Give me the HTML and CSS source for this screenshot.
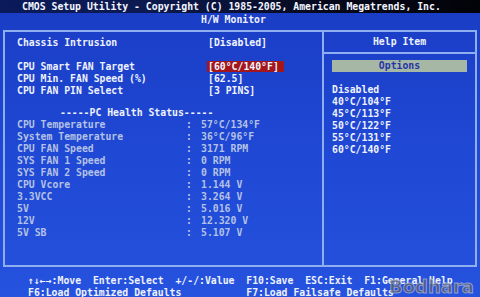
FILE: index.html
```html
<!DOCTYPE html>
<html>
<head>
<meta charset="utf-8">
<link rel="stylesheet" href="styles.css">
</head>
<body>
<div class="screen">
  <div class="topbar">CMOS Setup Utility - Copyright (C) 1985-2005, American Megatrends, Inc.</div>
  <div class="subtitle">H/W Monitor</div>
  <div class="frame">
    <div class="left">
      <div class="row"><span class="label">Chassis Intrusion</span><span class="value">[Disabled]</span></div>
      <div class="row blank"></div>
      <div class="row"><span class="label">CPU Smart FAN Target</span><span class="value"><span class="sel">[60°C/140°F]</span></span></div>
      <div class="row"><span class="label">CPU Min. FAN Speed (%)</span><span class="value">[62.5]</span></div>
      <div class="row"><span class="label">CPU FAN PIN Select</span><span class="value">[3 PINS]</span></div>
      <div class="row gap"></div>
      <div class="row heading">-----PC Health Status-----</div>
      <div class="row stat"><span class="label">CPU Temperature</span><span class="colon">:</span><span class="sval">57°C/134°F</span></div>
      <div class="row stat"><span class="label">System Temperature</span><span class="colon">:</span><span class="sval">36°C/96°F</span></div>
      <div class="row stat"><span class="label">CPU FAN Speed</span><span class="colon">:</span><span class="sval">3171 RPM</span></div>
      <div class="row stat"><span class="label">SYS FAN 1 Speed</span><span class="colon">:</span><span class="sval">0 RPM</span></div>
      <div class="row stat"><span class="label">SYS FAN 2 Speed</span><span class="colon">:</span><span class="sval">0 RPM</span></div>
      <div class="row stat"><span class="label">CPU Vcore</span><span class="colon">:</span><span class="sval">1.144 V</span></div>
      <div class="row stat"><span class="label">3.3VCC</span><span class="colon">:</span><span class="sval">3.264 V</span></div>
      <div class="row stat"><span class="label">5V</span><span class="colon">:</span><span class="sval">5.016 V</span></div>
      <div class="row stat"><span class="label">12V</span><span class="colon">:</span><span class="sval">12.320 V</span></div>
      <div class="row stat"><span class="label">5V SB</span><span class="colon">:</span><span class="sval">5.107 V</span></div>
    </div>
    <div class="right">
      <div class="help-head">Help Item</div>
      <div class="options">Options</div>
      <div class="opt-list">
        <div class="opt">Disabled</div>
        <div class="opt">40°C/104°F</div>
        <div class="opt">45°C/113°F</div>
        <div class="opt">50°C/122°F</div>
        <div class="opt">55°C/131°F</div>
        <div class="opt">60°C/140°F</div>
      </div>
    </div>
  </div>
  <div class="keys">
    <div class="keyline">↑↓←→:Move  Enter:Select  +/-/:Value  F10:Save  ESC:Exit  F1:General Help</div>
    <div class="keyline">F6:Load Optimized Defaults           F7:Load Failsafe Defaults</div>
  </div>
  <div class="watermark">Bodhara</div>
</div>
</body>
</html>
```

FILE: styles.css
```css
html, body {
  margin: 0;
  padding: 0;
}
body {
  width: 480px;
  height: 297px;
  overflow: hidden;
  background: #1e46d2;
}
.screen {
  position: relative;
  width: 480px;
  height: 297px;
  overflow: hidden;
  font-family: "DejaVu Sans Mono", "Liberation Mono", monospace;
  font-weight: bold;
  font-size: 9.8px;
  color: #eef2ff;
  background: linear-gradient(180deg, #1a3cc4 0%, #1f48d4 50%, #2552de 100%);
}
.topbar {
  height: 13px;
  line-height: 13px;
  padding-left: 22px;
  white-space: pre;
  color: #f4f6ff;
  background: linear-gradient(90deg, #0a1a5a 0%, #0c1a50 30%, #06081a 70%, #020308 100%);
}
.subtitle {
  height: 13px;
  line-height: 13px;
  padding-left: 201px;
  white-space: pre;
}
.frame {
  margin: 4px 0 0 3px;
  width: 470px;
  height: 233px;
  border: 2px solid #8eaef0;
  display: flex;
}
.left {
  width: 319px;
  border-right: 2px solid #8eaef0;
  padding-top: 5px;
  padding-left: 12px;
  box-sizing: border-box;
}
.row {
  height: 12px;
  line-height: 12px;
  display: flex;
  white-space: pre;
}
.row.gap {
  height: 10px;
}
.label {
  width: 191px;
}
.value {
  color: #f2f5ff;
}
.sel {
  background: #a3171c;
  padding: 0 5px 0 1px;
  margin-left: -1px;
}
.heading {
  padding-left: 43px;
}
.stat {
  color: #b4c2e6;
}
.stat .label {
  width: 169px;
}
.colon {
  width: 15px;
}
.right {
  flex: 1;
  display: flex;
  flex-direction: column;
}
.help-head {
  height: 20px;
  line-height: 20px;
  text-align: center;
  border-bottom: 2px solid #8eaef0;
}
.options {
  margin: 6px 8px 0 8px;
  height: 12px;
  line-height: 12px;
  background: #a7b7a6;
  color: #2536a6;
  text-align: center;
}
.opt-list {
  margin-top: 12px;
  padding-left: 8px;
}
.opt {
  height: 12px;
  line-height: 12px;
  white-space: pre;
}
.keys {
  padding: 8px 0 0 28px;
}
.keyline {
  height: 12px;
  line-height: 12px;
  white-space: pre;
}
.watermark {
  position: absolute;
  right: 6px;
  bottom: 0;
  font-family: "DejaVu Sans", sans-serif;
  font-size: 18px;
  line-height: 20px;
  font-weight: bold;
  color: rgba(90, 95, 120, 0.75);
  -webkit-text-stroke: 1px rgba(200, 205, 220, 0.6);
}
```
